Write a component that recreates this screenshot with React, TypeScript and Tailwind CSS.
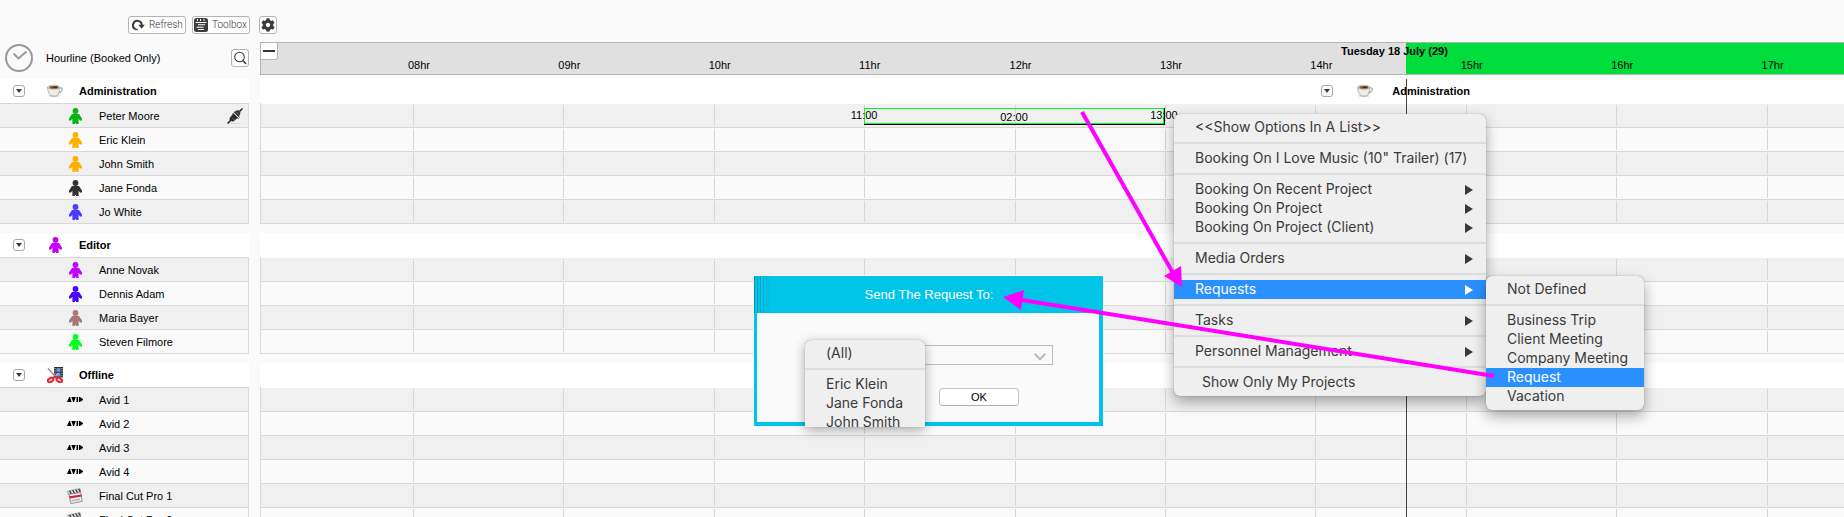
import React from "react";
import { FaCog } from "react-icons/fa";

type IconName = "person" | "cup" | "scissors" | "avid" | "clap";

type Resource = {
  name: string;
  icon: IconName;
  color?: string;
  linked?: boolean;
};

type Group = {
  title: string;
  icon: IconName;
  color?: string;
  rows: Resource[];
};

type Entry = {
  label: string;
  arrow?: boolean;
  active?: boolean;
  indent?: boolean;
};

const groups: Group[] = [
  {
    title: "Administration",
    icon: "cup",
    rows: [
      { name: "Peter Moore", icon: "person", color: "#08b412", linked: true },
      { name: "Eric Klein", icon: "person", color: "#ffb000" },
      { name: "John Smith", icon: "person", color: "#ffb000" },
      { name: "Jane Fonda", icon: "person", color: "#333333" },
      { name: "Jo White", icon: "person", color: "#4a3cff" },
    ],
  },
  {
    title: "Editor",
    icon: "person",
    color: "#c400ff",
    rows: [
      { name: "Anne Novak", icon: "person", color: "#c400ff" },
      { name: "Dennis Adam", icon: "person", color: "#4a00ff" },
      { name: "Maria Bayer", icon: "person", color: "#a87878" },
      { name: "Steven Filmore", icon: "person", color: "#00ff1e" },
    ],
  },
  {
    title: "Offline",
    icon: "scissors",
    rows: [
      { name: "Avid 1", icon: "avid" },
      { name: "Avid 2", icon: "avid" },
      { name: "Avid 3", icon: "avid" },
      { name: "Avid 4", icon: "avid" },
      { name: "Final Cut Pro 1", icon: "clap", color: "#d8232f" },
      { name: "Final Cut Pro 2", icon: "clap", color: "#e0b020" },
    ],
  },
];

const hours = ["08hr", "09hr", "10hr", "11hr", "12hr", "13hr", "14hr", "15hr", "16hr", "17hr"];

const mainMenu: Entry[][] = [
  [{ label: "<<Show Options In A List>>" }],
  [{ label: 'Booking On I Love Music (10" Trailer) (17)' }],
  [
    { label: "Booking On Recent Project", arrow: true },
    { label: "Booking On Project", arrow: true },
    { label: "Booking On Project (Client)", arrow: true },
  ],
  [{ label: "Media Orders", arrow: true }],
  [{ label: "Requests", arrow: true, active: true }],
  [{ label: "Tasks", arrow: true }],
  [{ label: "Personnel Management", arrow: true }],
  [{ label: "Show Only My Projects", indent: true }],
];

const requestMenu: Entry[][] = [
  [{ label: "Not Defined" }],
  [
    { label: "Business Trip" },
    { label: "Client Meeting" },
    { label: "Company Meeting" },
    { label: "Request", active: true },
    { label: "Vacation" },
  ],
];

const peopleMenu: Entry[][] = [
  [{ label: "(All)" }],
  [{ label: "Eric Klein" }, { label: "Jane Fonda" }, { label: "John Smith" }],
];

// same proportions as the grid columns of the timeline
function hourToPercent(hour: number) {
  return ((304 + 301 * (hour - 8)) / 3168) * 100;
}

function Icon({ name, color }: { name: IconName; color?: string }) {
  if (name === "person") {
    return (
      <svg className="w-4 h-4" viewBox="0 0 16 16" fill={color}>
        <circle cx="8.5" cy="3" r="2.900" />
        <path d="M5 6h7l3 4.400v2.200h-2l-1.400-1.800V16H9v-1h-1v1H5.400v-5.200L4 12.600H2v-2.200z" />
      </svg>
    );
  }
  if (name === "cup") {
    return (
      <svg className="w-4 h-4" viewBox="0 0 16 16">
        <ellipse cx="7" cy="12.6" rx="5.6" ry="1.6" fill="#d6d6d6" />
        <path d="M11.6 5.2c4.2-1.6 5 1.600 1.600 4.300l-2.200 1" fill="none" stroke="#a9a9a9" strokeWidth="1.200" />
        <path d="M.6 4.200c.2 4.600 1.800 8.300 5.200 8.800h2.600c3.200-.8 4.200-4.200 4.400-8.800z" fill="#ececec" stroke="#a0a0a0" strokeWidth=".8" />
        <ellipse cx="6.700" cy="4.200" rx="6.100" ry="2" fill="#f6f6f6" stroke="#999" strokeWidth=".7" />
        <ellipse cx="6.900" cy="4.400" rx="4.700" ry="1.400" fill="#8a5423" />
        <ellipse cx="8" cy="4.300" rx="2.600" ry=".7" fill="#4a2509" />
      </svg>
    );
  }
  if (name === "scissors") {
    return (
      <svg className="w-4 h-4" viewBox="0 0 16 16">
        <path d="M7 0h9v10.500H7z" fill="#2d3038" />
        <path d="M9.500 1.200h4v3.600h-4zM9.500 5.800h4v3.600h-4z" fill="#7c96dc" />
        <path d="M8 1v9M15 1v9" stroke="#c9ccd4" strokeWidth="1" strokeDasharray="1.200 1.200" />
        <path d="M1 1.500L9.500 10.500" stroke="#9b9ea3" strokeWidth="1.800" />
        <path d="M11 6.500L6.500 10.500" stroke="#c3c6ca" strokeWidth="1.200" />
        <ellipse cx="3.600" cy="13" rx="3" ry="2" transform="rotate(-28 3.600 13)" fill="#f6b9bd" stroke="#e0222f" strokeWidth="1.900" />
        <ellipse cx="12.200" cy="13" rx="3" ry="2" transform="rotate(28 12.200 13)" fill="#f6b9bd" stroke="#e0222f" strokeWidth="1.900" />
        <path d="M5.500 11.500L8 9.600l2.500 1.900" fill="none" stroke="#c9303a" strokeWidth="2" />
      </svg>
    );
  }
  if (name === "avid") {
    return (
      <svg className="w-4 h-4" viewBox="0 0 16 16" fill="#000">
        <path d="M0 10l2.200-5H3l1.600 5zM4.300 5h4.500L7 10h-.8zM9.500 5h1.600v5H9.500zM12 5h.9l3.100 2.100v.8L12.900 10H12z" />
      </svg>
    );
  }
  return (
    <svg className="w-4 h-4" viewBox="0 0 16 16">
      <path d="M1.800 6.200l12-1.600 1.400 8.800-11.400 2.200z" fill="#ececec" stroke="#8a8a8a" strokeWidth=".9" />
      <path d="M2.300 8.300l12.100-1.700.4 2-12 2z" fill={color} />
      <path d="M4.500 12.800l8.500-1.500" stroke="#9b9b9b" strokeWidth=".9" />
      <path d="M.6 3.200L13 .6l.7 3.200L1.500 6.200z" fill="#e4e4e4" stroke="#777" strokeWidth=".6" />
      <path d="M2.500 2.800l1.800 2.800M5.600 2.200l1.800 2.800M8.700 1.500l1.800 2.800M11.600 1l1.600 2.600" stroke="#3a3a3a" strokeWidth="1.300" />
    </svg>
  );
}

function PlugIcon() {
  return (
    <svg className="w-4 h-4" viewBox="0 0 16 16">
      <path d="M5 15.500h9" stroke="#dcdcdc" strokeWidth="1" />
      <path d="M.5 15.500l4-4M11.500 4.500l4-4" stroke="#222" strokeWidth="1.500" />
      <path d="M3 9.500L6.300 5.500l4.200 4.500-3.800 3.200c-1.600.5-2.800.2-3.700-.6-.6-.8-.6-2 0-3.100z" fill="#2b2b2b" />
      <path d="M7.200 4.400l1.800-1.700c1.500-.7 2.800-.4 3.800.4.700 1.100.8 2.300.1 3.700L11.600 8.800z" fill="#3d3d3d" />
      <path d="M5.800 5.200l5.600 5.600M7.200 3.800l5.400 5.400" stroke="#111" strokeWidth="1" />
      <path d="M5 9.500l2.500 2.600M9.300 4.600l2.400 2.300" stroke="#7b7b7b" strokeWidth=".8" />
    </svg>
  );
}

function Toggle({ label }: { label: string }) {
  return (
    <button aria-label={label} className="w-3 h-3 shrink-0 rounded-[3px] border border-[#a6a6a6] bg-white flex items-center justify-center">
      <svg className="w-[6px] h-1" viewBox="0 0 6 4" fill="#3c3c3c">
        <path d="M0 0h6L3 4z" />
      </svg>
    </button>
  );
}

function Toolbar() {
  return (
    <div className="flex pt-4 pl-32 h-[42px] items-start font-[Roboto,sans-serif] font-light text-[10px] text-[#333]">
      <button className="w-[58px] h-[18px] mr-[6px] rounded-[3px] border border-[#b4b4b4] bg-white flex items-center pl-[2px] gap-1">
        <svg className="w-[14px] h-[14px]" viewBox="0 0 14 14">
          <path d="M4.500 11.200A4.400 4.400 0 1 1 10.800 7.500" fill="none" stroke="#3c3c3c" strokeWidth="2" />
          <path d="M7.400 6.800h6.400l-3.200 4z" fill="#3c3c3c" />
          <path d="M4.200 11.500h2.400" stroke="#3c3c3c" strokeWidth="1.500" />
        </svg>
        Refresh
      </button>
      <button className="w-[58px] h-[18px] mr-[9px] rounded-[3px] border border-[#b4b4b4] bg-white flex items-center pl-[1px] gap-1">
        <svg className="w-[14px] h-[14px]" viewBox="0 0 14 14">
          <rect width="14" height="14" rx="2.500" fill="#3c3c3c" />
          <path d="M1.500 4.500h11" stroke="#fff" strokeWidth="1" />
          <path d="M3.500 1v2M6.500 1v2M10 1v2" stroke="#fff" strokeWidth="1" />
          <path d="M4 6.800h7M2.500 9.200h7M4 11.500h6" stroke="#fff" strokeWidth="1.100" />
        </svg>
        Toolbox
      </button>
      <button aria-label="Settings" className="w-[18px] h-[18px] rounded-[3px] border border-[#b4b4b4] bg-white flex items-center justify-center">
        <FaCog className="w-[14px] h-[14px] text-[#3c3c3c]" />
      </button>
    </div>
  );
}

function GroupHeader({ group }: { group: Group }) {
  return (
    <div className="h-6 bg-white flex items-center pl-[13px] font-bold">
      <Toggle label={group.title} />
      <span className="ml-[22px] mr-4">
        <Icon name={group.icon} color={group.color} />
      </span>
      {group.title}
    </div>
  );
}

function Sidebar() {
  return (
    <div className="w-[249px] shrink-0 flex flex-col">
      <div className="h-[33px] pb-[2px] mb-1 flex items-center pl-[5px]">
        <svg className="w-7 h-7 mr-[13px]" viewBox="0 0 28 28" fill="none" stroke="#999">
          <circle cx="14" cy="14" r="13" strokeWidth="2" />
          <path d="M8.500 9.500L13.500 14.500L21.500 7.500" strokeWidth="2" />
        </svg>
        <span className="flex-1">Hourline (Booked Only)</span>
        <button aria-label="Search" className="w-[18px] h-[18px] rounded-[3px] border border-[#b4b4b4] bg-white flex items-center justify-center">
          <svg className="w-[14px] h-[14px]" viewBox="0 0 14 14" fill="none" stroke="#3c3c3c">
            <circle cx="6.500" cy="6" r="4.800" strokeWidth="1.100" />
            <path d="M10 9.500l3 3.500" strokeWidth="1.600" />
          </svg>
        </button>
      </div>
      <div className="flex flex-col gap-[9px]">
        {groups.map((group) => (
          <div key={group.title}>
            <GroupHeader group={group} />
            <ul className="border-b border-r border-[#d9d9d9]">
              {group.rows.map((row) => (
                <li key={row.name} className="h-6 border-t border-[#d9d9d9] odd:bg-[#f0f0f0] flex items-center pl-[67px] pr-[5px]">
                  <Icon name={row.icon} color={row.color} />
                  <span className="ml-4 flex-1">{row.name}</span>
                  {row.linked && <PlugIcon />}
                </li>
              ))}
            </ul>
          </div>
        ))}
      </div>
    </div>
  );
}

function Booking() {
  return (
    <div
      className="absolute top-[4px] h-[17px] border-r border-b border-black"
      style={{ left: hourToPercent(11) + "%", width: hourToPercent(13) - hourToPercent(11) + "%" }}
    >
      <div className="h-4 border border-[#00ff1e] flex items-center justify-center pt-[2px]">02:00</div>
      <span className="absolute left-0 -top-px -translate-x-1/2 leading-4">11:00</span>
      <span className="absolute left-full -top-px -translate-x-1/2 leading-4">13:00</span>
    </div>
  );
}

function TimelineRow({ first }: { first: boolean }) {
  return (
    <div className="relative h-6 border-t border-[#d9d9d9] first:border-white odd:bg-[#f0f0f0] py-px grid grid-cols-[304fr_repeat(9,301fr)_155fr]">
      <div />
      {hours.map((hour) => (
        <div key={hour} className="border-l border-[#d6d6d6]" />
      ))}
      {first && <Booking />}
    </div>
  );
}

function Timeline() {
  return (
    <div className="flex-1 min-w-0 flex flex-col ml-[11px]">
      <div className="relative h-[33px] mb-1 border-y border-l border-[#b4b4b4] bg-[#e0e0e0]">
        <div className="absolute inset-y-0 right-0 left-[72.35%] bg-[#00dd3c]" />
        <div className="relative h-full grid grid-cols-[304fr_repeat(9,301fr)_155fr] items-end pb-[2px]">
          <div />
          {hours.map((hour) => (
            <div key={hour} className="-ml-[5px]">
              {hour}
            </div>
          ))}
        </div>
        <div className="absolute top-px left-[71.6%] -translate-x-1/2 font-bold">Tuesday 18 July (29)</div>
        <button aria-label="Collapse" className="absolute left-0 top-0 w-[17px] h-[17px] rounded-br-[3px] border-r border-b border-[#b4b4b4] bg-white flex items-center justify-center">
          <span className="w-3 h-[2px] bg-[#333]" />
        </button>
      </div>
      <div className="relative flex flex-col gap-[9px]">
        {groups.map((group, index) => (
          <div key={group.title}>
            <div className="h-6 bg-white flex items-center pl-[67%] font-bold">
              {index === 0 && (
                <>
                  <Toggle label="Administration group" />
                  <span className="ml-6 mr-[19px]">
                    <Icon name="cup" />
                  </span>
                  Administration
                </>
              )}
            </div>
            <div className="border-b border-l border-[#d9d9d9]">
              {group.rows.map((row, rowIndex) => (
                <TimelineRow key={row.name} first={index === 0 && rowIndex === 0} />
              ))}
            </div>
          </div>
        ))}
        <div className="absolute inset-y-0 left-[72.35%] w-px bg-[#444]" />
      </div>
    </div>
  );
}

function MenuList({ sections }: { sections: Entry[][] }) {
  return (
    <div className="py-1 font-[Inter,sans-serif] text-[14px] leading-[17px] text-[#3a3a3a]">
      {sections.map((section, index) => (
        <div key={index}>
          {index > 0 && <div className="my-[5px] h-[2px] bg-[#dedede]" />}
          {section.map((entry) => (
            <button
              key={entry.label}
              className={
                "w-full h-[19px] pr-[13px] flex items-center justify-between whitespace-nowrap text-left " +
                (entry.indent ? "pl-7 " : "pl-[21px] ") +
                (entry.active ? "bg-[#2a90ff] text-white" : "")
              }
            >
              <span className="pb-[2px]">{entry.label}</span>
              {entry.arrow && (
                <svg className="w-2 h-[10px]" viewBox="0 0 8 10" fill="currentColor">
                  <path d="M0 0l8 5-8 5z" />
                </svg>
              )}
            </button>
          ))}
        </div>
      ))}
    </div>
  );
}

function RequestDialog() {
  return (
    <div role="dialog" aria-label="Send The Request To" className="absolute left-[754px] top-[276px] w-[349px] h-[150px] bg-[#fafafa] border-4 border-t-0 border-l-[3px] border-[#00c5e8] shadow-[0_0_0_1px_#f8f8f8]">
      <div className="relative h-[37px] bg-[#00c5e8] flex items-center justify-center pl-[2px] text-[13px] text-white">
        <div className="absolute -left-[3px] inset-y-0 flex gap-[2px]">
          <span className="w-px bg-[#0093b3]" />
          <span className="w-px bg-[#009bbb]" />
          <span className="w-px bg-[#00a2c4]" />
          <span className="w-px bg-[#00aacc]" />
          <span className="w-px bg-[#00b2d3]" />
          <span className="w-px bg-[#00badb]" />
        </div>
        <label htmlFor="recipient">Send The Request To:</label>
      </div>
      <div className="pt-8 pl-[51px] pr-[46px]">
        <div className="relative">
          <select id="recipient" className="block w-full h-5 appearance-none border border-[#b9bdbe] bg-[#fafafa]" />
          <svg className="absolute right-[7px] top-2 w-3 h-2 pointer-events-none" viewBox="0 0 12 8" fill="none" stroke="#b9bdbe" strokeWidth="2">
            <path d="M.7.7L6 6.300L11.300.7" />
          </svg>
        </div>
        <button className="block mt-[23px] ml-[131px] w-20 h-[18px] rounded-[4px] border border-[#c4c4c4] border-b-[#b0b0b0] bg-white">OK</button>
      </div>
      <div className="absolute left-12 top-16 w-[120px] h-[87px] overflow-hidden rounded-t-[6px] bg-[#efefef] shadow-[0_0_1px_#0006,0_3px_12px_#0005]">
        <MenuList sections={peopleMenu} />
      </div>
    </div>
  );
}

function Arrows() {
  return (
    <svg className="absolute inset-0 w-full h-full pointer-events-none" stroke="#ff00ff" strokeWidth="4" fill="#ff00ff">
      <path d="M1082 112L1173 273" />
      <path d="M1182 287l-1-21-17 10z" stroke="none" />
      <path d="M1494 376L1022 300" />
      <path d="M1003 297l21-7-3 20z" stroke="none" />
    </svg>
  );
}

function App() {
  return (
    <div className="relative h-screen overflow-hidden bg-[#fafafa] font-['Liberation_Sans',Arial,sans-serif] text-[11px] leading-[14px] text-black">
      <Toolbar />
      <div className="flex">
        <Sidebar />
        <Timeline />
      </div>
      <RequestDialog />
      <div className="absolute left-[1174px] top-[114px] w-[312px] rounded-[6px] bg-[#efefef] shadow-[0_0_1px_#0008,0_6px_14px_#0005]">
        <MenuList sections={mainMenu} />
      </div>
      <div className="absolute left-[1486px] top-[276px] w-[158px] rounded-[6px] bg-[#efefef] shadow-[0_0_1px_#0008,0_6px_14px_#0005]">
        <MenuList sections={requestMenu} />
      </div>
      <Arrows />
    </div>
  );
}

export default App;
